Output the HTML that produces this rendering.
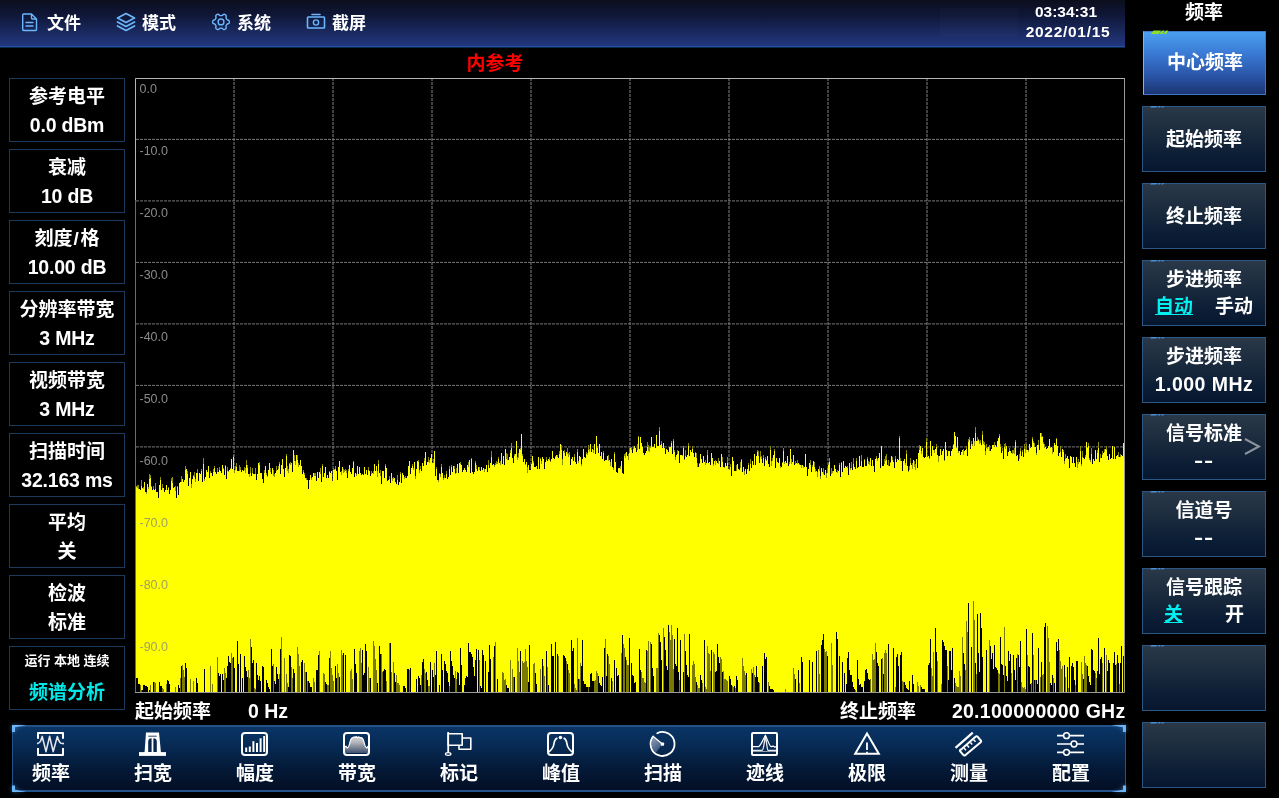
<!DOCTYPE html><html lang="zh"><head><meta charset="utf-8"><title>频谱分析</title><style>
*{box-sizing:border-box;margin:0;padding:0}
html,body{width:1282px;height:798px;background:#000;overflow:hidden}
body{position:relative;font-family:"Liberation Sans","Noto Sans CJK SC",sans-serif;color:#fff;font-weight:700}
.abs{position:absolute}
.mi,.clock,.ref,.lb,.fl,.ti,.rt,.rb{will-change:transform}
.strip{position:absolute;left:1279px;top:0;width:3px;height:798px;background:#fff}
.topbar{position:absolute;left:0;top:0;width:1125px;height:47px;background:linear-gradient(180deg,#0b0e1c 0%,#10183a 35%,#1b2b64 75%,#22377e 100%);border-bottom:1px solid #2150a0;box-shadow:0 1px 0 #0f2850}
.tbx{position:absolute;left:940px;top:8px;width:78px;height:29px;background:rgba(200,215,255,0.020)}
.mi{position:absolute;top:12px;height:24px;line-height:24px;font-size:17px;white-space:nowrap}
.clock{position:absolute;left:1004.5px;width:122px;text-align:center;font-size:15.5px;line-height:16px;white-space:nowrap}
.ref{position:absolute;left:440px;width:110px;top:52px;text-align:center;color:#f00;font-size:19px;line-height:24px}
.lb{position:absolute;left:9px;width:116px;height:64px;border:1px solid #1b3a5e;text-align:center;font-size:19px;white-space:nowrap}
.lb div{position:absolute;left:0;width:114px;height:24px;line-height:24px}
.lb .l1{top:6px}
.lb .l2{top:35px}
.lb .la{font-size:19.5px;top:33.8px;letter-spacing:-0.2px}
.fl{position:absolute;top:699.5px;height:24px;line-height:24px;font-size:19px;white-space:nowrap}
.tb{position:absolute;left:12px;top:725px;width:1114px;height:67px;border:solid #24528a;border-width:2px 1.500px;background:linear-gradient(180deg,#0a3566 0%,#072a54 30%,#041a38 65%,#030f24 100%)}
.ti{position:absolute;top:762px;width:102px;text-align:center;font-size:19px;line-height:24px;height:24px;white-space:nowrap}
.rt{position:absolute;left:1142px;width:124px;top:1px;text-align:center;font-size:19px;line-height:24px}
.rb{position:absolute;left:1142px;width:124px;height:66px;border:1px solid #2b5785;background:linear-gradient(180deg,#2a3848 0%,#1b2b3e 40%,#0c1e36 75%,#06162e 100%);text-align:center;font-size:19px;white-space:nowrap}
.rb.act{left:1143px;width:123px;top:31px;height:64px;border:1px solid #3d78c8;border-left-color:#7fb4ea;background:linear-gradient(180deg,#4a9ef0 0%,#3a7ad4 35%,#2a55a8 70%,#1c3674 100%)}
.rb div{position:absolute;left:0;width:122px;height:24px;line-height:24px}
.rb .s{top:21px}
.rb .l1{top:7px}
.rb .l2{top:34px}
.cy{color:#00f0f0;text-decoration:underline}
</style></head><body>
<div class="strip"></div>
<div class="topbar"></div><div class="tbx"></div>
<div class="mi" style="left:47px">文件</div>
<div class="mi" style="left:142px">模式</div>
<div class="mi" style="left:237px">系统</div>
<div class="mi" style="left:332px">截屏</div>
<div class="clock" style="top:4px">03:34:31</div>
<div class="clock" style="top:24px;left:1007px;letter-spacing:0.7px">2022/01/15</div>
<div class="ref">内参考</div>
<div class="lb" style="top:78px"><div class="l1">参考电平</div><div class="l2 la">0.0 dBm</div></div>
<div class="lb" style="top:149px"><div class="l1">衰减</div><div class="l2 la">10 dB</div></div>
<div class="lb" style="top:220px"><div class="l1">刻度<span style="padding:0 1.500px 0 1px">/</span>格</div><div class="l2 la">10.00 dB</div></div>
<div class="lb" style="top:291px"><div class="l1">分辨率带宽</div><div class="l2 la">3 MHz</div></div>
<div class="lb" style="top:362px"><div class="l1">视频带宽</div><div class="l2 la">3 MHz</div></div>
<div class="lb" style="top:433px"><div class="l1">扫描时间</div><div class="l2 la">32.163 ms</div></div>
<div class="lb" style="top:504px"><div class="l1">平均</div><div class="l2">关</div></div>
<div class="lb" style="top:575px"><div class="l1">检波</div><div class="l2">标准</div></div>
<div class="lb" style="top:646px"><div class="l1" style="font-size:13px;top:1.500px">运行 本地 连续</div><div class="l2" style="color:#00e8e8;font-size:19px;top:34px">频谱分析</div></div>
<div class="fl" style="left:135px">起始频率</div>
<div class="fl" style="left:247.500px;font-size:19.500px;top:698.500px">0 Hz</div>
<div class="fl" style="left:840px">终止频率</div>
<div class="fl" style="left:925px;width:200.500px;text-align:right;font-size:19.500px;top:698.500px;letter-spacing:0.280px">20.100000000 GHz</div>
<div class="tb"></div>
<div class="ti" style="left:0px">频率</div>
<div class="ti" style="left:102px">扫宽</div>
<div class="ti" style="left:204px">幅度</div>
<div class="ti" style="left:306px">带宽</div>
<div class="ti" style="left:408px">标记</div>
<div class="ti" style="left:510px">峰值</div>
<div class="ti" style="left:612px">扫描</div>
<div class="ti" style="left:714px">迹线</div>
<div class="ti" style="left:816px">极限</div>
<div class="ti" style="left:918px">测量</div>
<div class="ti" style="left:1020px">配置</div>
<div class="rt">频率</div>
<div class="rb act"><div class="s" style="top:19px">中心频率</div></div>
<div class="rb" style="top:106px"><div class="s">起始频率</div></div>
<div class="rb" style="top:183px"><div class="s">终止频率</div></div>
<div class="rb" style="top:260px"><div class="l1">步进频率</div><div class="l2"><span class="cy">自动</span><span style="display:inline-block;width:22px"></span>手动</div></div>
<div class="rb" style="top:337px"><div class="l1">步进频率</div><div class="l2" style="font-size:19.500px;letter-spacing:0.450px;top:33.500px">1.000 MHz</div></div>
<div class="rb" style="top:414px"><div class="l1">信号标准</div><div class="l2"><span style="display:inline-block;transform:scaleX(1.450);letter-spacing:0.600px">--</span></div></div>
<div class="rb" style="top:491px"><div class="l1">信道号</div><div class="l2"><span style="display:inline-block;transform:scaleX(1.450);letter-spacing:0.600px">--</span></div></div>
<div class="rb" style="top:568px"><div class="l1">信号跟踪</div><div class="l2"><span class="cy">关</span><span style="display:inline-block;width:42px"></span>开</div></div>
<div class="rb" style="top:645px"></div>
<div class="rb" style="top:722px"></div>
<svg class="abs" style="left:0;top:0" width="1282" height="798" viewBox="0 0 1282 798">
<defs><linearGradient id="gh" x1="0" y1="0" x2="0" y2="1"><stop offset="0" stop-color="#d8d8d8"/><stop offset="0.350" stop-color="#b4b6ba"/><stop offset="1" stop-color="#3f5270"/></linearGradient><linearGradient id="gs" x1="0" y1="0" x2="0.600" y2="1"><stop offset="0" stop-color="#93a3ba"/><stop offset="1" stop-color="#33507a"/></linearGradient><filter id="glow" x="-50%" y="-50%" width="200%" height="200%"><feGaussianBlur stdDeviation="2.200"/></filter></defs>
<g shape-rendering="crispEdges"><line x1="234" y1="79" x2="234" y2="692" stroke="#424242" stroke-width="2" stroke-dasharray="3 1" stroke-dashoffset="1"/><line x1="333" y1="79" x2="333" y2="692" stroke="#424242" stroke-width="2" stroke-dasharray="3 1" stroke-dashoffset="1"/><line x1="432" y1="79" x2="432" y2="692" stroke="#424242" stroke-width="2" stroke-dasharray="3 1" stroke-dashoffset="1"/><line x1="531" y1="79" x2="531" y2="692" stroke="#424242" stroke-width="2" stroke-dasharray="3 1" stroke-dashoffset="1"/><line x1="630" y1="79" x2="630" y2="692" stroke="#424242" stroke-width="2" stroke-dasharray="3 1" stroke-dashoffset="1"/><line x1="729" y1="79" x2="729" y2="692" stroke="#424242" stroke-width="2" stroke-dasharray="3 1" stroke-dashoffset="1"/><line x1="828" y1="79" x2="828" y2="692" stroke="#424242" stroke-width="2" stroke-dasharray="3 1" stroke-dashoffset="1"/><line x1="927" y1="79" x2="927" y2="692" stroke="#424242" stroke-width="2" stroke-dasharray="3 1" stroke-dashoffset="1"/><line x1="1026" y1="79" x2="1026" y2="692" stroke="#424242" stroke-width="2" stroke-dasharray="3 1" stroke-dashoffset="1"/></g>
<g><line x1="136" y1="139.4" x2="1124" y2="139.4" stroke="#787878" stroke-width="1" stroke-dasharray="3 1"/><line x1="136" y1="200.9" x2="1124" y2="200.9" stroke="#787878" stroke-width="1" stroke-dasharray="3 1"/><line x1="136" y1="262.4" x2="1124" y2="262.4" stroke="#787878" stroke-width="1" stroke-dasharray="3 1"/><line x1="136" y1="323.9" x2="1124" y2="323.9" stroke="#787878" stroke-width="1" stroke-dasharray="3 1"/><line x1="136" y1="385.4" x2="1124" y2="385.4" stroke="#787878" stroke-width="1" stroke-dasharray="3 1"/><line x1="136" y1="446.9" x2="1124" y2="446.9" stroke="#787878" stroke-width="1" stroke-dasharray="3 1"/><line x1="136" y1="508.4" x2="1124" y2="508.4" stroke="#787878" stroke-width="1" stroke-dasharray="3 1"/><line x1="136" y1="569.9" x2="1124" y2="569.9" stroke="#787878" stroke-width="1" stroke-dasharray="3 1"/><line x1="136" y1="631.4" x2="1124" y2="631.4" stroke="#787878" stroke-width="1" stroke-dasharray="3 1"/></g>
<path d="M136 692V487h1V488h1V489h1V489h1V490h1V486h1V488h1V489h1V482h1V492h1V494h1V484h1V489h1V479h1V478h1V487h1V490h1V489h1V490h1V489h1V492h1V492h1V498h1V485h1V480h1V490h1V488h1V488h1V492h1V490h1V485h1V490h1V488h1V494h1V490h1V481h1V483h1V488h1V487h1V491h1V498h1V487h1V495h1V483h1V482h1V482h1V479h1V482h1V480h1V470h1V469h1V474h1V486h1V478h1V472h1V488h1V479h1V476h1V477h1V482h1V473h1V473h1V481h1V473h1V474h1V471h1V482h1V464h1V481h1V477h1V470h1V472h1V466h1V478h1V473h1V473h1V476h1V472h1V468h1V472h1V474h1V472h1V472h1V470h1V471h1V473h1V465h1V469h1V475h1V466h1V479h1V471h1V472h1V470h1V469h1V459h1V469h1V457h1V473h1V470h1V467h1V471h1V471h1V471h1V470h1V472h1V470h1V471h1V470h1V473h1V465h1V468h1V474h1V477h1V473h1V476h1V473h1V474h1V474h1V474h1V480h1V474h1V463h1V465h1V473h1V473h1V479h1V483h1V473h1V466h1V475h1V477h1V470h1V463h1V472h1V474h1V468h1V476h1V477h1V473h1V471h1V470h1V469h1V464h1V474h1V465h1V459h1V469h1V477h1V468h1V456h1V471h1V473h1V464h1V465h1V463h1V472h1V450h1V461h1V465h1V455h1V460h1V467h1V465h1V460h1V466h1V474h1V472h1V475h1V478h1V480h1V480h1V489h1V480h1V475h1V480h1V477h1V473h1V476h1V476h1V481h1V472h1V478h1V472h1V474h1V482h1V466h1V477h1V473h1V467h1V478h1V475h1V478h1V472h1V473h1V471h1V481h1V470h1V470h1V469h1V471h1V480h1V467h1V461h1V472h1V475h1V467h1V473h1V472h1V471h1V473h1V478h1V471h1V465h1V472h1V474h1V468h1V462h1V477h1V473h1V476h1V466h1V474h1V467h1V473h1V475h1V474h1V475h1V467h1V474h1V470h1V475h1V470h1V471h1V476h1V474h1V473h1V474h1V464h1V471h1V466h1V477h1V464h1V473h1V476h1V484h1V471h1V471h1V478h1V466h1V468h1V481h1V480h1V479h1V483h1V473h1V481h1V479h1V478h1V482h1V484h1V480h1V485h1V482h1V474h1V483h1V473h1V475h1V479h1V478h1V478h1V476h1V466h1V461h1V474h1V468h1V466h1V470h1V462h1V479h1V469h1V461h1V462h1V473h1V469h1V471h1V463h1V466h1V461h1V452h1V465h1V462h1V462h1V463h1V458h1V454h1V463h1V463h1V451h1V476h1V469h1V480h1V482h1V474h1V477h1V467h1V473h1V480h1V478h1V478h1V474h1V479h1V477h1V469h1V475h1V467h1V472h1V466h1V469h1V474h1V473h1V464h1V473h1V463h1V464h1V465h1V472h1V470h1V468h1V470h1V472h1V465h1V467h1V460h1V473h1V459h1V472h1V474h1V472h1V463h1V469h1V471h1V467h1V470h1V471h1V467h1V470h1V468h1V472h1V469h1V465h1V472h1V465h1V468h1V463h1V457h1V465h1V464h1V467h1V465h1V464h1V464h1V459h1V463h1V465h1V453h1V464h1V456h1V465h1V449h1V459h1V460h1V460h1V457h1V453h1V448h1V458h1V463h1V456h1V454h1V441h1V460h1V458h1V449h1V450h1V434h1V456h1V462h1V459h1V465h1V462h1V473h1V465h1V470h1V470h1V464h1V456h1V463h1V467h1V467h1V466h1V469h1V457h1V469h1V459h1V464h1V457h1V459h1V469h1V462h1V460h1V461h1V459h1V460h1V462h1V459h1V451h1V458h1V459h1V457h1V455h1V457h1V458h1V454h1V444h1V450h1V465h1V451h1V453h1V456h1V452h1V454h1V457h1V455h1V465h1V459h1V457h1V461h1V457h1V462h1V464h1V452h1V463h1V456h1V457h1V466h1V459h1V449h1V457h1V458h1V454h1V455h1V450h1V452h1V444h1V452h1V449h1V453h1V444h1V454h1V436h1V448h1V453h1V444h1V456h1V452h1V459h1V453h1V461h1V460h1V460h1V456h1V461h1V460h1V466h1V459h1V467h1V470h1V454h1V462h1V472h1V473h1V468h1V468h1V469h1V461h1V473h1V474h1V456h1V458h1V452h1V456h1V460h1V453h1V448h1V450h1V453h1V449h1V446h1V448h1V452h1V450h1V437h1V449h1V437h1V443h1V447h1V453h1V455h1V453h1V451h1V447h1V451h1V452h1V448h1V437h1V447h1V447h1V444h1V448h1V435h1V446h1V446h1V431h1V445h1V444h1V448h1V443h1V448h1V454h1V449h1V450h1V452h1V447h1V447h1V443h1V454h1V441h1V452h1V460h1V455h1V454h1V451h1V463h1V455h1V455h1V456h1V448h1V460h1V456h1V457h1V455h1V446h1V456h1V450h1V452h1V449h1V453h1V457h1V453h1V458h1V467h1V467h1V464h1V454h1V459h1V463h1V456h1V462h1V465h1V463h1V455h1V463h1V462h1V465h1V453h1V458h1V466h1V461h1V465h1V461h1V463h1V464h1V461h1V467h1V454h1V462h1V467h1V468h1V463h1V466h1V463h1V469h1V470h1V467h1V476h1V457h1V461h1V471h1V471h1V471h1V464h1V469h1V470h1V468h1V460h1V472h1V467h1V475h1V469h1V474h1V469h1V465h1V471h1V464h1V468h1V461h1V465h1V454h1V465h1V456h1V452h1V456h1V463h1V457h1V459h1V463h1V458h1V466h1V459h1V461h1V456h1V464h1V467h1V450h1V466h1V461h1V455h1V451h1V468h1V458h1V462h1V463h1V458h1V468h1V467h1V463h1V451h1V464h1V461h1V463h1V456h1V466h1V464h1V449h1V464h1V462h1V455h1V465h1V464h1V463h1V464h1V463h1V465h1V465h1V468h1V465h1V468h1V467h1V454h1V467h1V476h1V469h1V463h1V465h1V472h1V467h1V461h1V467h1V472h1V471h1V477h1V469h1V471h1V479h1V468h1V472h1V474h1V475h1V470h1V478h1V473h1V465h1V462h1V476h1V474h1V473h1V471h1V465h1V469h1V472h1V473h1V471h1V465h1V477h1V463h1V472h1V461h1V468h1V466h1V467h1V468h1V475h1V463h1V470h1V468h1V470h1V464h1V467h1V469h1V461h1V468h1V467h1V456h1V466h1V461h1V467h1V467h1V460h1V466h1V466h1V459h1V464h1V465h1V458h1V466h1V460h1V466h1V472h1V459h1V458h1V461h1V458h1V453h1V468h1V446h1V466h1V466h1V464h1V461h1V460h1V465h1V466h1V466h1V463h1V456h1V460h1V462h1V468h1V459h1V462h1V459h1V460h1V438h1V461h1V461h1V471h1V461h1V459h1V465h1V454h1V466h1V472h1V470h1V463h1V465h1V469h1V460h1V467h1V470h1V459h1V468h1V453h1V450h1V446h1V454h1V448h1V457h1V458h1V457h1V442h1V457h1V456h1V459h1V441h1V456h1V446h1V450h1V453h1V449h1V447h1V455h1V462h1V456h1V449h1V455h1V451h1V449h1V461h1V442h1V450h1V456h1V451h1V451h1V456h1V451h1V449h1V445h1V432h1V436h1V448h1V437h1V453h1V451h1V455h1V452h1V450h1V455h1V451h1V450h1V449h1V456h1V442h1V440h1V449h1V444h1V446h1V438h1V446h1V433h1V441h1V441h1V440h1V444h1V443h1V445h1V435h1V444h1V445h1V455h1V448h1V449h1V447h1V451h1V451h1V449h1V445h1V445h1V447h1V445h1V447h1V441h1V438h1V436h1V447h1V453h1V451h1V459h1V447h1V449h1V446h1V456h1V452h1V451h1V451h1V453h1V454h1V453h1V454h1V442h1V456h1V455h1V461h1V459h1V451h1V456h1V452h1V457h1V449h1V453h1V450h1V450h1V452h1V444h1V448h1V447h1V439h1V443h1V447h1V447h1V455h1V445h1V445h1V450h1V433h1V437h1V437h1V444h1V448h1V447h1V449h1V448h1V446h1V439h1V448h1V447h1V454h1V452h1V443h1V445h1V439h1V446h1V456h1V453h1V452h1V457h1V449h1V452h1V464h1V459h1V458h1V456h1V459h1V468h1V456h1V457h1V463h1V457h1V463h1V467h1V457h1V468h1V464h1V462h1V451h1V466h1V457h1V458h1V459h1V457h1V442h1V448h1V446h1V460h1V462h1V454h1V464h1V459h1V461h1V450h1V459h1V453h1V448h1V462h1V458h1V458h1V455h1V453h1V452h1V449h1V450h1V456h1V460h1V454h1V459h1V458h1V446h1V459h1V447h1V459h1V456h1V455h1V457h1V457h1V457h1V455h1V456h1V443h1V452h1V692Z" fill="#ffff00" shape-rendering="crispEdges"/>
<path d="M136.5 487v-1M137.5 488v-3M138.5 489v-4M141.5 486v-6M143.5 489v-2M146.5 494v-2M148.5 489v-2M149.5 479v-5M150.5 478v-3M151.5 487v-1M153.5 489v-3M155.5 489v-6M160.5 480v-3M162.5 488v-4M168.5 488v-1M171.5 481v-3M172.5 483v-6M175.5 491v-5M177.5 487v-1M181.5 482v-6M185.5 470v-4M187.5 474v-3M191.5 488v-4M193.5 476v-1M194.5 477v-5M195.5 482v-3M197.5 473v-4M201.5 471v-2M203.5 464v-6M204.5 481v-2M210.5 473v-2M213.5 472v-3M214.5 468v-2M217.5 472v-4M219.5 470v-3M223.5 469v-1M225.5 466v-1M227.5 471v-4M228.5 472v-1M230.5 469v-1M233.5 457v-2M234.5 473v-3M235.5 470v-4M236.5 467v-4M239.5 471v-6M240.5 470v-3M244.5 470v-3M245.5 473v-5M246.5 465v-5M247.5 468v-3M249.5 477v-3M250.5 473v-6M252.5 473v-5M255.5 474v-6M259.5 465v-3M264.5 473v-3M266.5 475v-2M267.5 477v-1M270.5 472v-4M273.5 476v-6M274.5 477v-3M276.5 471v-5M278.5 469v-3M279.5 464v-2M286.5 456v-2M287.5 471v-5M288.5 473v-4M289.5 464v-1M290.5 465v-3M294.5 461v-6M295.5 465v-4M297.5 460v-5M298.5 467v-4M303.5 472v-2M304.5 475v-2M306.5 480v-2M311.5 480v-2M314.5 476v-3M315.5 476v-3M320.5 474v-6M322.5 466v-2M329.5 472v-1M333.5 470v-2M334.5 470v-1M335.5 469v-3M341.5 475v-4M343.5 473v-4M344.5 472v-2M345.5 471v-2M346.5 473v-3M348.5 471v-2M353.5 462v-1M356.5 476v-2M368.5 470v-3M371.5 474v-3M373.5 474v-3M377.5 477v-6M378.5 464v-4M380.5 476v-6M385.5 466v-2M389.5 479v-3M392.5 481v-3M393.5 479v-2M397.5 480v-5M400.5 474v-2M404.5 479v-2M405.5 478v-2M412.5 466v-2M413.5 470v-2M415.5 479v-3M418.5 462v-2M419.5 473v-3M420.5 469v-3M424.5 461v-3M428.5 462v-5M429.5 463v-3M433.5 463v-4M436.5 469v-2M438.5 482v-2M439.5 474v-1M440.5 477v-3M441.5 467v-3M443.5 480v-2M444.5 478v-3M446.5 474v-3M449.5 469v-3M451.5 467v-2M454.5 469v-3M455.5 474v-1M456.5 473v-5M460.5 464v-2M468.5 467v-5M471.5 459v-1M475.5 463v-2M476.5 469v-4M479.5 470v-3M484.5 472v-3M488.5 465v-5M491.5 457v-6M494.5 467v-2M495.5 465v-2M496.5 464v-3M497.5 464v-2M498.5 459v-2M500.5 465v-4M506.5 459v-6M507.5 460v-6M510.5 453v-3M511.5 448v-5M514.5 456v-2M517.5 460v-3M518.5 458v-5M520.5 450v-2M522.5 456v-2M525.5 465v-1M527.5 473v-6M533.5 463v-2M540.5 459v-1M541.5 464v-3M546.5 460v-3M549.5 460v-3M550.5 462v-1M555.5 457v-1M557.5 457v-2M559.5 454v-3M561.5 450v-5M562.5 465v-6M564.5 453v-3M567.5 454v-6M568.5 457v-4M569.5 455v-3M574.5 457v-3M577.5 452v-3M578.5 463v-2M581.5 466v-2M586.5 454v-2M587.5 455v-2M588.5 450v-5M589.5 452v-3M593.5 453v-3M597.5 448v-2M603.5 453v-2M608.5 461v-6M610.5 466v-4M613.5 470v-2M614.5 454v-2M620.5 469v-3M624.5 456v-2M625.5 458v-5M628.5 460v-6M629.5 453v-5M631.5 450v-3M633.5 449v-2M637.5 450v-6M638.5 437v-1M642.5 447v-1M647.5 447v-5M648.5 451v-6M649.5 452v-5M650.5 448v-2M659.5 431v-4M661.5 444v-3M671.5 443v-2M673.5 441v-2M674.5 452v-2M675.5 460v-3M677.5 454v-4M682.5 456v-1M683.5 448v-2M684.5 460v-1M685.5 456v-6M688.5 446v-3M692.5 449v-3M695.5 453v-1M696.5 458v-5M697.5 467v-4M699.5 464v-1M705.5 465v-5M707.5 455v-5M713.5 466v-2M715.5 465v-5M718.5 464v-6M722.5 462v-5M724.5 468v-1M727.5 463v-6M729.5 470v-1M730.5 467v-3M736.5 471v-6M740.5 468v-6M741.5 460v-1M744.5 475v-4M748.5 465v-2M750.5 464v-5M757.5 452v-2M758.5 456v-5M760.5 457v-6M761.5 459v-3M763.5 458v-3M765.5 459v-2M766.5 461v-1M770.5 450v-4M771.5 466v-5M772.5 461v-3M774.5 451v-2M780.5 468v-2M782.5 463v-1M783.5 451v-3M784.5 464v-2M789.5 464v-2M791.5 464v-5M795.5 464v-3M797.5 464v-4M799.5 465v-1M801.5 468v-3M803.5 468v-2M810.5 465v-5M812.5 467v-2M814.5 467v-5M815.5 472v-3M817.5 477v-5M819.5 471v-5M820.5 479v-3M823.5 474v-6M826.5 478v-5M827.5 473v-5M828.5 465v-2M829.5 462v-4M831.5 474v-6M832.5 473v-2M837.5 473v-3M839.5 465v-2M841.5 463v-1M847.5 468v-2M850.5 470v-2M851.5 468v-6M853.5 464v-6M856.5 461v-3M861.5 461v-6M864.5 460v-1M867.5 459v-2M868.5 464v-3M869.5 465v-3M876.5 458v-2M877.5 461v-2M884.5 464v-5M885.5 461v-5M886.5 460v-6M888.5 466v-6M890.5 463v-1M892.5 460v-3M895.5 459v-3M899.5 438v-2M900.5 461v-3M905.5 465v-2M906.5 454v-4M908.5 472v-1M909.5 470v-4M910.5 463v-5M912.5 469v-6M914.5 467v-6M915.5 470v-6M919.5 450v-5M921.5 454v-3M926.5 442v-4M929.5 459v-1M934.5 453v-3M936.5 447v-3M938.5 462v-6M944.5 461v-1M953.5 445v-1M956.5 448v-1M958.5 453v-2M963.5 455v-6M966.5 449v-3M968.5 442v-3M969.5 440v-3M971.5 444v-3M972.5 446v-2M974.5 446v-5M975.5 433v-6M977.5 441v-4M978.5 440v-1M979.5 444v-3M980.5 443v-3M982.5 435v-4M983.5 444v-3M984.5 445v-3M985.5 455v-4M986.5 448v-4M987.5 449v-2M989.5 451v-6M994.5 447v-5M999.5 436v-2M1000.5 447v-3M1002.5 451v-3M1004.5 447v-3M1005.5 449v-6M1009.5 451v-3M1012.5 454v-4M1013.5 453v-3M1014.5 454v-6M1015.5 442v-2M1019.5 459v-5M1020.5 451v-3M1022.5 452v-2M1024.5 449v-5M1025.5 453v-4M1026.5 450v-6M1028.5 452v-2M1032.5 439v-2M1033.5 443v-2M1034.5 447v-4M1036.5 455v-2M1038.5 445v-5M1041.5 437v-4M1042.5 437v-1M1043.5 444v-2M1044.5 448v-4M1050.5 448v-1M1052.5 454v-6M1056.5 439v-1M1060.5 452v-6M1063.5 452v-2M1064.5 464v-3M1065.5 459v-5M1077.5 468v-6M1078.5 464v-5M1080.5 451v-5M1081.5 466v-2M1082.5 457v-6M1085.5 457v-2M1087.5 448v-1M1088.5 446v-3M1089.5 460v-2M1090.5 462v-2M1091.5 454v-6M1097.5 453v-3M1098.5 448v-6M1100.5 458v-4M1102.5 455v-4M1104.5 452v-3M1106.5 450v-4M1118.5 457v-5M1120.5 457v-3" stroke="#8c8c00" stroke-width="1" fill="none" shape-rendering="crispEdges"/>
<path d="M140.5 692v-7M141.5 692v-2M150.5 692v-7M154.5 692v-10M155.5 692v-9M162.5 692v-4M163.5 692v-3M166.5 692v-8M175.5 692v-5M180.5 692v-14M182.5 692v-27M183.5 692v-22M184.5 692v-15M190.5 692v-13M193.5 692v-11M210.5 692v-26M212.5 692v-8M217.5 692v-35M224.5 692v-24M225.5 692v-19M231.5 692v-39M232.5 692v-34M248.5 692v-22M249.5 692v-14M250.5 692v-53M254.5 692v-4M255.5 692v-3M273.5 692v-28M279.5 692v-18M281.5 692v-55M284.5 692v-34M286.5 692v-18M287.5 692v-9M291.5 692v-25M292.5 692v-14M297.5 692v-45M298.5 692v-38M299.5 692v-26M304.5 692v-29M305.5 692v-20M307.5 692v-11M313.5 692v-14M314.5 692v-10M319.5 692v-41M323.5 692v-19M324.5 692v-18M327.5 692v-7M328.5 692v-7M330.5 692v-41M331.5 692v-24M332.5 692v-17M333.5 692v-11M337.5 692v-28M338.5 692v-19M341.5 692v-42M342.5 692v-37M350.5 692v-21M351.5 692v-23M352.5 692v-13M359.5 692v-41M360.5 692v-44M361.5 692v-29M368.5 692v-25M369.5 692v-14M373.5 692v-51M374.5 692v-46M375.5 692v-33M376.5 692v-22M381.5 692v-38M382.5 692v-20M386.5 692v-11M389.5 692v-49M391.5 692v-20M393.5 692v-30M396.5 692v-17M397.5 692v-9M398.5 692v-9M399.5 692v-7M409.5 692v-22M421.5 692v-17M424.5 692v-23M425.5 692v-19M428.5 692v-6M429.5 692v-6M434.5 692v-29M449.5 692v-6M455.5 692v-21M456.5 692v-13M479.5 692v-32M493.5 692v-35M495.5 692v-50M502.5 692v-20M503.5 692v-19M504.5 692v-12M505.5 692v-13M510.5 692v-32M512.5 692v-23M513.5 692v-15M517.5 692v-44M518.5 692v-31M519.5 692v-20M522.5 692v-31M523.5 692v-29M524.5 692v-30M525.5 692v-43M526.5 692v-31M527.5 692v-25M533.5 692v-28M534.5 692v-29M540.5 692v-23M543.5 692v-26M544.5 692v-16M547.5 692v-25M558.5 692v-36M566.5 692v-31M568.5 692v-22M569.5 692v-19M574.5 692v-8M575.5 692v-4M576.5 692v-2M577.5 692v-54M579.5 692v-13M580.5 692v-29M588.5 692v-5M594.5 692v-11M595.5 692v-12M596.5 692v-21M597.5 692v-19M605.5 692v-53M608.5 692v-36M609.5 692v-28M612.5 692v-11M621.5 692v-39M623.5 692v-48M624.5 692v-44M626.5 692v-32M627.5 692v-27M628.5 692v-27M641.5 692v-20M642.5 692v-14M643.5 692v-14M644.5 692v-10M645.5 692v-9M647.5 692v-41M648.5 692v-51M650.5 692v-50M656.5 692v-24M657.5 692v-24M658.5 692v-59M663.5 692v-64M669.5 692v-60M670.5 692v-52M671.5 692v-67M672.5 692v-57M673.5 692v-23M679.5 692v-12M684.5 692v-58M692.5 692v-27M693.5 692v-31M694.5 692v-28M695.5 692v-15M697.5 692v-7M698.5 692v-4M699.5 692v-4M702.5 692v-9M705.5 692v-5M706.5 692v-3M707.5 692v-46M708.5 692v-39M709.5 692v-38M710.5 692v-21M713.5 692v-40M714.5 692v-38M720.5 692v-35M721.5 692v-33M723.5 692v-21M724.5 692v-13M725.5 692v-13M726.5 692v-12M727.5 692v-11M732.5 692v-6M733.5 692v-5M735.5 692v-4M742.5 692v-34M743.5 692v-26M744.5 692v-21M745.5 692v-17M751.5 692v-23M753.5 692v-25M754.5 692v-17M759.5 692v-9M768.5 692v-10M785.5 692v-3M793.5 692v-24M794.5 692v-18M799.5 692v-9M818.5 692v-42M819.5 692v-18M824.5 692v-43M825.5 692v-40M826.5 692v-41M831.5 692v-49M832.5 692v-27M855.5 692v-2M870.5 692v-13M872.5 692v-38M873.5 692v-32M874.5 692v-33M875.5 692v-49M882.5 692v-34M884.5 692v-39M885.5 692v-42M886.5 692v-39M895.5 692v-5M902.5 692v-11M903.5 692v-10M917.5 692v-10M918.5 692v-6M920.5 692v-7M931.5 692v-24M932.5 692v-16M933.5 692v-40M937.5 692v-31M941.5 692v-8M947.5 692v-26M955.5 692v-9M956.5 692v-6M957.5 692v-5M958.5 692v-5M959.5 692v-21M960.5 692v-16M962.5 692v-55M965.5 692v-22M966.5 692v-71M967.5 692v-60M973.5 692v-91M974.5 692v-72M976.5 692v-18M989.5 692v-52M998.5 692v-19M999.5 692v-18M1004.5 692v-65M1011.5 692v-19M1017.5 692v-38M1021.5 692v-10M1022.5 692v-5M1023.5 692v-4M1024.5 692v-5M1025.5 692v-3M1027.5 692v-37M1031.5 692v-9M1033.5 692v-37M1035.5 692v-12M1040.5 692v-15M1042.5 692v-17M1043.5 692v-18M1047.5 692v-66M1048.5 692v-54M1049.5 692v-30M1053.5 692v-14M1059.5 692v-42M1060.5 692v-31M1061.5 692v-23M1062.5 692v-26M1065.5 692v-15M1068.5 692v-4M1075.5 692v-7M1081.5 692v-30M1082.5 692v-18M1084.5 692v-36M1085.5 692v-29M1086.5 692v-27M1095.5 692v-19M1096.5 692v-14M1102.5 692v-29M1106.5 692v-37M1116.5 692v-28M1119.5 692v-8" stroke="#7a7a00" stroke-width="1" fill="none" shape-rendering="crispEdges"/>
<path d="M136.5 692v-14M137.5 692v-14M138.5 692v-8M139.5 692v-8M142.5 692v-2M143.5 692v-7M144.5 692v-7M145.5 692v-6M146.5 692v-6M147.5 692v-5M149.5 692v-2M153.5 692v-10M159.5 692v-10M160.5 692v-6M161.5 692v-6M167.5 692v-12M168.5 692v-11M169.5 692v-8M178.5 692v-7M179.5 692v-4M181.5 692v-26M185.5 692v-29M186.5 692v-24M196.5 692v-14M197.5 692v-9M204.5 692v-23M218.5 692v-19M219.5 692v-16M220.5 692v-18M222.5 692v-18M223.5 692v-12M226.5 692v-14M227.5 692v-26M228.5 692v-36M229.5 692v-30M230.5 692v-29M233.5 692v-35M234.5 692v-24M237.5 692v-51M238.5 692v-28M240.5 692v-38M242.5 692v-14M244.5 692v-36M245.5 692v-25M246.5 692v-21M247.5 692v-15M251.5 692v-45M252.5 692v-29M253.5 692v-32M256.5 692v-29M257.5 692v-17M258.5 692v-12M259.5 692v-16M260.5 692v-11M262.5 692v-26M263.5 692v-25M266.5 692v-12M267.5 692v-9M268.5 692v-5M269.5 692v-3M271.5 692v-43M272.5 692v-26M274.5 692v-11M275.5 692v-8M276.5 692v-25M277.5 692v-18M278.5 692v-13M280.5 692v-43M288.5 692v-5M289.5 692v-37M290.5 692v-36M293.5 692v-23M294.5 692v-19M301.5 692v-30M302.5 692v-32M306.5 692v-20M308.5 692v-11M309.5 692v-9M310.5 692v-5M311.5 692v-5M316.5 692v-22M317.5 692v-22M318.5 692v-37M325.5 692v-10M326.5 692v-8M329.5 692v-34M335.5 692v-26M336.5 692v-14M339.5 692v-15M343.5 692v-39M345.5 692v-37M354.5 692v-43M355.5 692v-28M356.5 692v-19M362.5 692v-42M363.5 692v-17M364.5 692v-19M365.5 692v-48M366.5 692v-41M370.5 692v-14M377.5 692v-9M379.5 692v-46M380.5 692v-38M383.5 692v-21M384.5 692v-23M385.5 692v-22M390.5 692v-49M394.5 692v-19M395.5 692v-10M403.5 692v-6M404.5 692v-6M405.5 692v-4M407.5 692v-23M408.5 692v-23M410.5 692v-24M416.5 692v-13M418.5 692v-16M419.5 692v-14M420.5 692v-7M422.5 692v-30M423.5 692v-33M426.5 692v-20M427.5 692v-12M430.5 692v-30M432.5 692v-22M433.5 692v-15M435.5 692v-17M436.5 692v-41M439.5 692v-7M441.5 692v-38M442.5 692v-22M444.5 692v-31M445.5 692v-28M446.5 692v-21M447.5 692v-19M448.5 692v-10M450.5 692v-41M451.5 692v-31M452.5 692v-26M453.5 692v-17M454.5 692v-14M457.5 692v-20M458.5 692v-19M459.5 692v-7M460.5 692v-44M461.5 692v-27M464.5 692v-7M465.5 692v-14M466.5 692v-16M467.5 692v-15M468.5 692v-49M469.5 692v-40M470.5 692v-40M471.5 692v-38M472.5 692v-35M473.5 692v-25M474.5 692v-16M475.5 692v-32M476.5 692v-43M478.5 692v-42M480.5 692v-6M481.5 692v-4M482.5 692v-42M483.5 692v-37M485.5 692v-31M488.5 692v-20M489.5 692v-47M490.5 692v-33M494.5 692v-46M497.5 692v-13M506.5 692v-7M507.5 692v-4M508.5 692v-4M514.5 692v-15M520.5 692v-41M528.5 692v-10M529.5 692v-47M535.5 692v-19M536.5 692v-8M542.5 692v-33M546.5 692v-41M548.5 692v-7M551.5 692v-48M552.5 692v-36M553.5 692v-36M555.5 692v-50M557.5 692v-38M563.5 692v-37M564.5 692v-36M565.5 692v-34M567.5 692v-28M571.5 692v-52M572.5 692v-41M573.5 692v-44M578.5 692v-13M581.5 692v-26M582.5 692v-52M583.5 692v-11M584.5 692v-8M585.5 692v-8M586.5 692v-5M587.5 692v-5M589.5 692v-5M590.5 692v-18M591.5 692v-19M592.5 692v-11M593.5 692v-11M598.5 692v-16M599.5 692v-9M600.5 692v-7M601.5 692v-6M602.5 692v-15M604.5 692v-44M606.5 692v-16M607.5 692v-38M611.5 692v-14M614.5 692v-32M616.5 692v-24M617.5 692v-16M618.5 692v-17M622.5 692v-57M625.5 692v-35M629.5 692v-54M631.5 692v-29M632.5 692v-17M633.5 692v-16M634.5 692v-9M635.5 692v-10M639.5 692v-43M640.5 692v-22M646.5 692v-42M651.5 692v-48M652.5 692v-24M653.5 692v-16M659.5 692v-57M660.5 692v-50M661.5 692v-32M664.5 692v-55M665.5 692v-42M666.5 692v-26M667.5 692v-22M668.5 692v-67M674.5 692v-53M675.5 692v-28M676.5 692v-26M677.5 692v-64M678.5 692v-20M680.5 692v-52M683.5 692v-20M685.5 692v-41M686.5 692v-27M687.5 692v-17M688.5 692v-15M689.5 692v-58M696.5 692v-10M700.5 692v-17M701.5 692v-12M704.5 692v-52M711.5 692v-42M715.5 692v-20M716.5 692v-21M717.5 692v-48M718.5 692v-35M719.5 692v-29M722.5 692v-20M729.5 692v-16M730.5 692v-13M731.5 692v-7M734.5 692v-6M736.5 692v-16M737.5 692v-12M746.5 692v-19M752.5 692v-19M755.5 692v-15M756.5 692v-26M757.5 692v-15M758.5 692v-10M762.5 692v-26M764.5 692v-39M765.5 692v-33M766.5 692v-35M769.5 692v-6M770.5 692v-3M771.5 692v-3M772.5 692v-3M773.5 692v-2M795.5 692v-13M798.5 692v-22M801.5 692v-35M802.5 692v-30M809.5 692v-32M812.5 692v-30M816.5 692v-41M821.5 692v-47M822.5 692v-52M823.5 692v-58M827.5 692v-36M836.5 692v-60M837.5 692v-53M839.5 692v-36M842.5 692v-30M844.5 692v-19M846.5 692v-8M847.5 692v-34M848.5 692v-40M849.5 692v-22M850.5 692v-17M851.5 692v-17M852.5 692v-10M853.5 692v-5M854.5 692v-3M857.5 692v-32M858.5 692v-13M859.5 692v-7M860.5 692v-8M861.5 692v-5M862.5 692v-5M864.5 692v-11M865.5 692v-22M866.5 692v-23M867.5 692v-19M868.5 692v-13M869.5 692v-12M876.5 692v-40M877.5 692v-29M878.5 692v-26M881.5 692v-33M883.5 692v-18M888.5 692v-48M893.5 692v-44M896.5 692v-35M897.5 692v-38M898.5 692v-26M900.5 692v-37M901.5 692v-40M904.5 692v-10M905.5 692v-7M906.5 692v-4M907.5 692v-3M908.5 692v-2M909.5 692v-11M912.5 692v-17M913.5 692v-8M921.5 692v-5M922.5 692v-3M923.5 692v-3M924.5 692v-3M928.5 692v-27M929.5 692v-29M930.5 692v-53M935.5 692v-64M936.5 692v-40M942.5 692v-52M943.5 692v-50M944.5 692v-46M945.5 692v-42M946.5 692v-42M948.5 692v-12M949.5 692v-41M950.5 692v-41M951.5 692v-22M952.5 692v-44M954.5 692v-14M963.5 692v-39M964.5 692v-28M968.5 692v-89M971.5 692v-45M975.5 692v-29M977.5 692v-78M978.5 692v-39M979.5 692v-20M980.5 692v-79M981.5 692v-64M982.5 692v-35M986.5 692v-42M990.5 692v-46M991.5 692v-33M992.5 692v-39M993.5 692v-23M994.5 692v-47M995.5 692v-25M996.5 692v-24M997.5 692v-22M1000.5 692v-55M1001.5 692v-28M1002.5 692v-27M1003.5 692v-17M1005.5 692v-26M1006.5 692v-16M1007.5 692v-11M1008.5 692v-41M1009.5 692v-31M1010.5 692v-38M1013.5 692v-37M1014.5 692v-22M1015.5 692v-12M1016.5 692v-34M1018.5 692v-37M1019.5 692v-25M1020.5 692v-51M1026.5 692v-63M1028.5 692v-26M1029.5 692v-25M1030.5 692v-8M1032.5 692v-59M1034.5 692v-12M1036.5 692v-12M1037.5 692v-8M1038.5 692v-44M1041.5 692v-30M1044.5 692v-65M1045.5 692v-69M1050.5 692v-9M1051.5 692v-7M1052.5 692v-17M1054.5 692v-9M1056.5 692v-50M1057.5 692v-41M1058.5 692v-53M1064.5 692v-27M1067.5 692v-25M1069.5 692v-35M1071.5 692v-26M1072.5 692v-29M1073.5 692v-25M1074.5 692v-12M1076.5 692v-31M1077.5 692v-31M1083.5 692v-13M1087.5 692v-26M1088.5 692v-16M1089.5 692v-10M1090.5 692v-7M1091.5 692v-43M1092.5 692v-42M1093.5 692v-22M1094.5 692v-21M1097.5 692v-21M1098.5 692v-54M1099.5 692v-18M1100.5 692v-33M1101.5 692v-35M1104.5 692v-44M1107.5 692v-21M1108.5 692v-32M1109.5 692v-29M1113.5 692v-29M1114.5 692v-40M1115.5 692v-27M1117.5 692v-37M1118.5 692v-29M1120.5 692v-29M1121.5 692v-46M1123.5 692v-36M1124.5 692v-31" stroke="#000" stroke-width="1" fill="none" shape-rendering="crispEdges"/>
<path d="M135.500 200V692" stroke="#7a7a00" stroke-width="1" fill="none"/>
<path d="M135.500 200V78.500H1125" stroke="#b4b4b4" stroke-width="1" fill="none"/>
<path d="M1124.500 78.500V692.500H135" stroke="#9a9a9a" stroke-width="1" fill="none"/>
<text x="139.500" y="93.2" font-family="Liberation Sans,sans-serif" font-size="12.500" font-weight="400" fill="#8a8a8a">0.0</text>
<text x="139.500" y="155.2" font-family="Liberation Sans,sans-serif" font-size="12.500" font-weight="400" fill="#8a8a8a">-10.0</text>
<text x="139.500" y="217.2" font-family="Liberation Sans,sans-serif" font-size="12.500" font-weight="400" fill="#8a8a8a">-20.0</text>
<text x="139.500" y="279.2" font-family="Liberation Sans,sans-serif" font-size="12.500" font-weight="400" fill="#8a8a8a">-30.0</text>
<text x="139.500" y="341.2" font-family="Liberation Sans,sans-serif" font-size="12.500" font-weight="400" fill="#8a8a8a">-40.0</text>
<text x="139.500" y="403.2" font-family="Liberation Sans,sans-serif" font-size="12.500" font-weight="400" fill="#8a8a8a">-50.0</text>
<text x="139.500" y="465.2" font-family="Liberation Sans,sans-serif" font-size="12.500" font-weight="400" fill="#8a8a8a">-60.0</text>
<text x="139.500" y="527.2" font-family="Liberation Sans,sans-serif" font-size="12.500" font-weight="400" fill="#a2a25c">-70.0</text>
<text x="139.500" y="589.2" font-family="Liberation Sans,sans-serif" font-size="12.500" font-weight="400" fill="#a2a25c">-80.0</text>
<text x="139.500" y="651.2" font-family="Liberation Sans,sans-serif" font-size="12.500" font-weight="400" fill="#a2a25c">-90.0</text>
<g fill="none" stroke="#6cb6fb" stroke-width="1.400" stroke-linejoin="round" stroke-linecap="round">
<path d="M23.700 14h7.800l5 5V29.500a1 1 0 0 1 -1 1H23.700a1 1 0 0 1 -1 -1V15a1 1 0 0 1 1 -1z M31.500 14.300v3.700a1 1 0 0 0 1 1h3.700 M26 22.500h7 M26 26h7"/>
<path d="M126 13.500l8.500 4.500l-8.500 4.500l-8.500 -4.500z M117.500 22l8.500 4.500l8.500 -4.500 M117.500 26l8.500 4.500l8.500 -4.500" stroke-width="1.700"/>
<path d="M229.35 21.90L229.31 22.44L229.18 22.98L228.81 23.45L228.05 23.79L227.29 24.03L226.87 24.33L226.62 24.67L226.41 25.02L226.21 25.38L226.04 25.77L225.99 26.28L226.16 27.06L226.25 27.89L226.02 28.44L225.63 28.83L225.18 29.13L224.69 29.37L224.16 29.52L223.56 29.44L222.89 28.95L222.29 28.41L221.83 28.20L221.41 28.15L221.00 28.15L220.59 28.15L220.17 28.20L219.71 28.41L219.11 28.95L218.44 29.44L217.84 29.52L217.31 29.37L216.82 29.13L216.37 28.83L215.98 28.44L215.75 27.89L215.84 27.06L216.01 26.28L215.96 25.77L215.79 25.38L215.59 25.02L215.38 24.67L215.13 24.33L214.71 24.03L213.95 23.79L213.19 23.45L212.82 22.98L212.69 22.44L212.65 21.90L212.69 21.36L212.82 20.82L213.19 20.35L213.95 20.01L214.71 19.77L215.13 19.47L215.38 19.13L215.59 18.77L215.79 18.42L215.96 18.03L216.01 17.52L215.84 16.74L215.75 15.91L215.98 15.36L216.37 14.97L216.82 14.67L217.31 14.43L217.84 14.28L218.44 14.36L219.11 14.85L219.71 15.39L220.17 15.60L220.59 15.65L221.00 15.65L221.41 15.65L221.83 15.60L222.29 15.39L222.89 14.85L223.56 14.36L224.16 14.28L224.69 14.43L225.18 14.67L225.63 14.97L226.02 15.36L226.25 15.91L226.16 16.74L225.99 17.52L226.04 18.03L226.21 18.42L226.41 18.77L226.62 19.13L226.87 19.47L227.29 19.77L228.05 20.01L228.81 20.35L229.18 20.82L229.31 21.36Z"/>
<circle cx="221" cy="21.900" r="2.900"/>
<path d="M312 14.5h8" stroke-width="1.6"/><rect x="307.500" y="17" width="17" height="11" rx="0.800" stroke-width="1.600"/><circle cx="316" cy="22.500" r="2.6"/>
</g>
<g fill="none" stroke="#fff" stroke-width="1.8" stroke-linejoin="round" stroke-linecap="butt">
<path d="M38 738.800V733H63V738.800 M38 748V755H63V748" stroke-width="2"/>
<path d="M37 743.600C39.500 743.400 40 742.500 40.600 741L42.200 736.400L46 751.600L49.600 736.400L53.200 751.600L57.300 736.600C58.500 740.500 59.500 742.800 61 743.200L64 743.600" stroke-width="1.600" stroke="#e4e8ee"/>
<path d="M139 754H166" stroke-width="3.800"/>
<path d="M146 732.500H159L161 753H144.500Z" fill="#fff" stroke="none"/>
<path d="M148.200 752V741.500Q148.300 738.300 151.600 738.200V752Z M153.400 752V738.200Q156.700 738.300 156.800 741.500V752Z" fill="#06274e" stroke="none"/>
<path d="M148.300 736.200H156.700" stroke="#0a2f5c" stroke-width="0.900"/>
<rect x="242" y="733" width="25" height="22" rx="3" stroke-width="2"/>
<path d="M246.2 752V747.6" stroke-width="2"/>
<path d="M249.8 752V746.5" stroke-width="2"/>
<path d="M253.4 752V741.2" stroke-width="2"/>
<path d="M257.0 752V743.0" stroke-width="2"/>
<path d="M260.6 752V738.3" stroke-width="2"/>
<path d="M264.2 752V736.0" stroke-width="2"/>
<path d="M345 747L346 746.200L347 748C349 748 349.500 744 350.300 741C351 738.500 351.800 737.600 353 737.600L354 736.900L355 737.600L356.300 736.600L357.500 737.600L358.800 736.900L360 737.600L361 737.600C362.200 737.600 363 738.500 363.700 741C364.500 744 365 748 367 748L368 746.200L369 747V753H345Z" fill="url(#gh)" stroke="none"/>
<path d="M345 747L346 746.200L347 748C349 748 349.500 744 350.300 741C351 738.500 351.800 737.600 353 737.600L354 736.900L355 737.600L356.300 736.600L357.500 737.600L358.800 736.900L360 737.600L361 737.600C362.200 737.600 363 738.500 363.700 741C364.500 744 365 748 367 748L368 746.200L369 747" stroke-width="1.200"/>
<rect x="344" y="733" width="25" height="22" rx="3" stroke-width="2"/>
<path d="M462.500 738H470.800V749.300H459V745.500" stroke-width="1.600"/><path d="M448.200 732V753" stroke-width="1.800"/><rect x="448.200" y="733.800" width="14" height="11.500" stroke-width="1.600"/><ellipse cx="448.200" cy="754" rx="2.800" ry="1.400" stroke-width="1.200"/>
<rect x="548" y="733" width="25" height="22" rx="3" stroke-width="2"/>
<path d="M549 751.800C552 749.500 553.600 747 554 743.500C554.400 740.500 555.500 738.800 557.400 738.100 M563.600 738.100C565.400 738.800 566.500 740.500 566.900 743.500C567.300 747 569 749.500 572 751.800" stroke-width="1.700"/><circle cx="560.450" cy="737.500" r="1.750" fill="#fff" stroke="none"/>
<path d="M662.400 744L654.100 737.100A10.800 10.800 0 0 0 656 752.700Z" fill="url(#gs)" stroke="none"/>
<path d="M657.200 733.200A12 12 0 1 1 653.240 736.370" stroke-width="1.800" stroke-linecap="round"/><path d="M662.400 744L653.300 736.400" stroke-width="1.300"/><rect x="660.800" y="742.400" width="3.300" height="3.300" rx="0.800" fill="#fff" stroke="none"/>
<rect x="752" y="733" width="25" height="22" rx="1" stroke-width="2"/>
<path d="M753 746.600H758.600C760.500 746 762.500 741 765.400 735.200C768 741 769.500 746 771 746.600L773.500 746.200L774.500 747.200L777 746.600" stroke-width="1.200"/><path d="M753 750.300H762.200C763.800 750 764 742 765.400 736.500C766.800 742 767 750 768 750.300H777" stroke-width="1.300" stroke-opacity="0.900"/><path d="M753 751.500H777" stroke-width="0.800" stroke-opacity="0.700"/>
<path d="M867 733.600L878.800 753.800H855.200Z" stroke-width="2" stroke-linejoin="miter"/><path d="M867 742.500V750" stroke-width="1.800"/><path d="M867 751.800V753.500" stroke-width="1.800"/>
<path d="M955.500 747.800L972.800 732.600" stroke-width="2.200"/>
<path d="M960.300 750.300L975.800 736.600a1.200 1.200 0 0 1 1.700 0.100l3.300 3.800a1.200 1.200 0 0 1 -0.100 1.700L965.200 755.300a1.200 1.200 0 0 1 -1.700 -0.100l-3.300 -3.800a1.200 1.200 0 0 1 0.100 -1.700z" stroke-width="2"/>
<path d="M964 748.100l1.900 2.100 M967.200 745.300l1.900 2.100 M970.400 742.500l1.900 2.100 M973.600 739.700l1.900 2.100" stroke-width="1.500"/>
<path d="M1057 735.7H1063.6 M1069.4 735.7H1084" stroke-width="1.700"/><circle cx="1066.5" cy="735.7" r="2.900" stroke-width="1.500"/>
<path d="M1057 744.0H1071.1 M1076.9 744.0H1084" stroke-width="1.700"/><circle cx="1074.0" cy="744.0" r="2.900" stroke-width="1.500"/>
<path d="M1057 752.3H1063.6 M1069.4 752.3H1084" stroke-width="1.700"/><circle cx="1066.5" cy="752.3" r="2.900" stroke-width="1.500"/>
</g>
<path d="M12 725H26.500L15 727.300V732H12Z M12 792H26.500L15 789.700V785.500H12Z M1126 725H1111.500L1123 727.300V732H1126Z M1126 792H1111.500L1123 789.700V785.500H1126Z" fill="#6cb4f8" opacity="0.550" filter="url(#glow)"/>
<path d="M12 725H26.500L15 727.300V732H12Z M12 792H26.500L15 789.700V785.500H12Z M1126 725H1111.500L1123 727.300V732H1126Z M1126 792H1111.500L1123 789.700V785.500H1126Z" fill="#6cb4f8"/>
<g fill="#8ee020" fill-opacity="1"><path d="M1151 34l2.500 -3.500h7.500l-2.500 3.500z M1159.6 34l2.500 -3.500h2.600l-2.500 3.500z M1163.4 34l2.500 -3.500h2.600l-2.500 3.500z"/></g>
<g fill="#4d8fd6"><path d="M1150 107.5l1.500 -1.500h6l-1.500 1.500z M1157.5 107.5l1.500 -1.500h2l-1.500 1.500z M1161 107.5l1.500 -1.500h2l-1.500 1.500z"/></g>
<g fill="#4d8fd6"><path d="M1150 184.5l1.500 -1.500h6l-1.500 1.500z M1157.5 184.5l1.500 -1.500h2l-1.500 1.500z M1161 184.5l1.500 -1.500h2l-1.500 1.500z"/></g>
<g fill="#4d8fd6"><path d="M1150 261.5l1.500 -1.500h6l-1.500 1.500z M1157.5 261.5l1.500 -1.500h2l-1.500 1.500z M1161 261.5l1.500 -1.500h2l-1.500 1.500z"/></g>
<g fill="#4d8fd6"><path d="M1150 338.5l1.500 -1.500h6l-1.500 1.500z M1157.5 338.5l1.500 -1.500h2l-1.500 1.500z M1161 338.5l1.500 -1.500h2l-1.500 1.500z"/></g>
<g fill="#4d8fd6"><path d="M1150 415.5l1.500 -1.500h6l-1.500 1.500z M1157.5 415.5l1.500 -1.500h2l-1.500 1.500z M1161 415.5l1.500 -1.500h2l-1.500 1.500z"/></g>
<g fill="#4d8fd6"><path d="M1150 492.5l1.500 -1.500h6l-1.500 1.500z M1157.5 492.5l1.500 -1.500h2l-1.500 1.500z M1161 492.5l1.500 -1.500h2l-1.500 1.500z"/></g>
<g fill="#4d8fd6"><path d="M1150 569.5l1.500 -1.500h6l-1.500 1.500z M1157.5 569.5l1.500 -1.500h2l-1.500 1.500z M1161 569.5l1.500 -1.500h2l-1.500 1.500z"/></g>
<g fill="#4d8fd6"><path d="M1150 646.5l1.500 -1.500h6l-1.500 1.500z M1157.5 646.5l1.500 -1.500h2l-1.500 1.500z M1161 646.5l1.500 -1.500h2l-1.500 1.500z"/></g>
<g fill="#4d8fd6"><path d="M1150 723.5l1.500 -1.500h6l-1.500 1.500z M1157.5 723.5l1.500 -1.500h2l-1.500 1.500z M1161 723.5l1.500 -1.500h2l-1.500 1.500z"/></g>
<path d="M1245 439L1259 446.500L1245 454" fill="none" stroke="#8a929c" stroke-width="2"/>
</svg>
</body></html>
